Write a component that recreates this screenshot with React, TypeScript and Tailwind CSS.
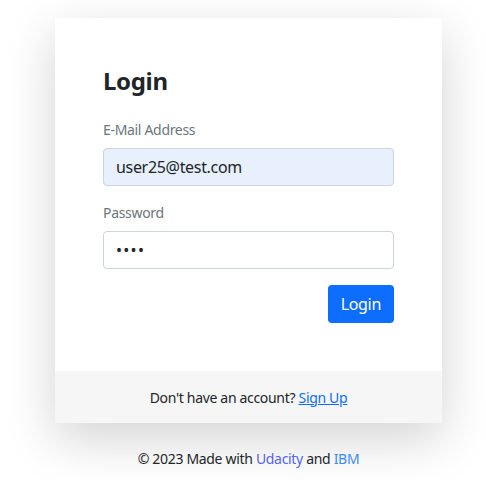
export default function App() {
  return (
    <div
      className="min-h-[480px] w-full bg-white pt-[18px] pl-[11px] tracking-[-0.02em] text-[#212529]"
      style={{ fontFamily: '"Noto Sans", "Liberation Sans", sans-serif' }}
    >
      <div className="mx-auto w-[387px] bg-white shadow-[0_16px_48px_rgba(0,0,0,0.175)]">
        <div className="px-12 pt-12 pb-12">
          <h1 className="mb-6 text-[24px] leading-[29px] font-bold">Login</h1>
          <form className="flex flex-col">
            <label className="mb-2 text-[14px] leading-[21px] text-[#6c757d]">
              E-Mail Address
            </label>
            <input
              type="email"
              defaultValue="user25@test.com"
              className="mb-4 h-[38px] w-full rounded border border-[#ced4da] bg-[#e8f0fe] px-3 text-[16px] tracking-[-0.02em] text-[#212529] outline-none"
            />
            <label className="mb-2 text-[14px] leading-[21px] text-[#6c757d]">
              Password
            </label>
            <input
              type="password"
              defaultValue="test"
              className="mb-4 h-[38px] w-full rounded border border-[#ced4da] bg-white px-3 text-[16px] tracking-[0.08em] text-[#212529] outline-none"
            />
            <div className="flex justify-end">
              <button
                type="button"
                className="h-[38px] rounded bg-[#0d6efd] px-[13px] text-[16px] text-white"
              >
                Login
              </button>
            </div>
          </form>
        </div>
        <div className="flex h-[52px] items-center justify-center bg-[#f6f6f6] text-[14px]">
          <span>
            Don't have an account?{" "}
            <a href="#" className="text-[#0d6efd] underline">
              Sign Up
            </a>
          </span>
        </div>
      </div>
      <p className="mt-[25px] text-center text-[14px] leading-[21px]">
        © 2023 Made with <span className="text-[#5563f2]">Udacity</span> and{" "}
        <span className="text-[#3d8bfd]">IBM</span>
      </p>
    </div>
  );
}
